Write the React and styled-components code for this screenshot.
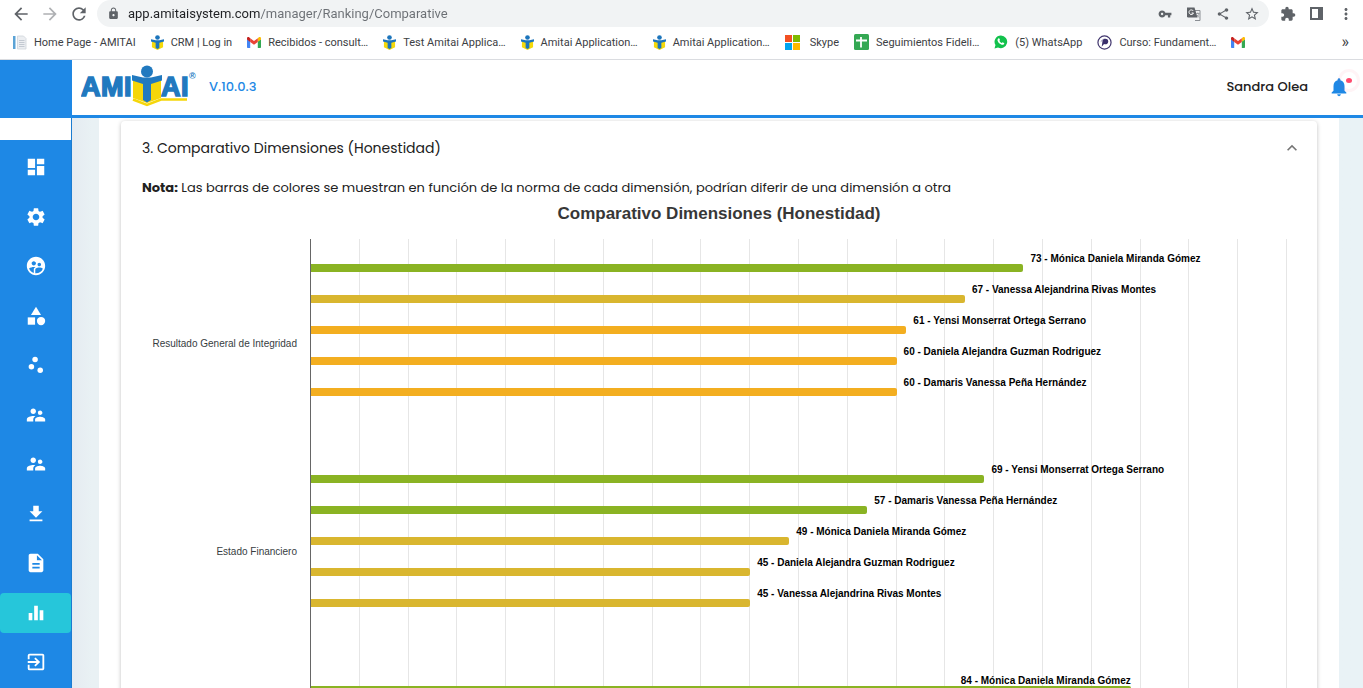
import React, { useState } from "react";
import styled, { createGlobalStyle } from "styled-components";
import {
  MdArrowBack,
  MdArrowForward,
  MdCategory,
  MdDashboard,
  MdDescription,
  MdDownload,
  MdEqualizer,
  MdExitToApp,
  MdExpandLess,
  MdExtension,
  MdLock,
  MdMoreVert,
  MdNotifications,
  MdRefresh,
  MdScatterPlot,
  MdSettings,
  MdShare,
  MdStarBorder,
  MdSupervisedUserCircle,
  MdSupervisorAccount,
  MdVpnKey,
} from "react-icons/md";

const GREEN = "#8ab323";
const MUSTARD = "#d9b62f";
const ORANGE = "#f3ae20";

const categories = [
  {
    name: "Resultado General de Integridad",
    results: [
      { score: 73, person: "Mónica Daniela Miranda Gómez", color: GREEN },
      { score: 67, person: "Vanessa Alejandrina Rivas Montes", color: MUSTARD },
      { score: 61, person: "Yensi Monserrat Ortega Serrano", color: ORANGE },
      { score: 60, person: "Daniela Alejandra Guzman Rodriguez", color: ORANGE },
      { score: 60, person: "Damaris Vanessa Peña Hernández", color: ORANGE },
    ],
  },
  {
    name: "Estado Financiero",
    results: [
      { score: 69, person: "Yensi Monserrat Ortega Serrano", color: GREEN },
      { score: 57, person: "Damaris Vanessa Peña Hernández", color: GREEN },
      { score: 49, person: "Mónica Daniela Miranda Gómez", color: MUSTARD },
      { score: 45, person: "Daniela Alejandra Guzman Rodriguez", color: MUSTARD },
      { score: 45, person: "Vanessa Alejandrina Rivas Montes", color: MUSTARD },
    ],
  },
  {
    name: "",
    results: [
      { score: 84, person: "Mónica Daniela Miranda Gómez", color: GREEN },
    ],
  },
];

const menu = [
  { name: "Dashboard", Icon: MdDashboard },
  { name: "Settings", Icon: MdSettings },
  { name: "Users", Icon: MdSupervisedUserCircle },
  { name: "Categories", Icon: MdCategory },
  { name: "Scatter", Icon: MdScatterPlot },
  { name: "Groups", Icon: MdSupervisorAccount },
  { name: "Candidates", Icon: MdSupervisorAccount },
  { name: "Downloads", Icon: MdDownload },
  { name: "Reports", Icon: MdDescription },
  { name: "Ranking", Icon: MdEqualizer, active: true },
  { name: "Exit", Icon: MdExitToApp },
];

const AmitaiIcon = () => (
  <svg width="13" height="15" viewBox="0 0 14 16">
    <path d="M1 6l6 2 6-2v7l-6 3-6-3z" fill="#f5d90a" />
    <circle cx="7" cy="2.6" r="2.5" fill="#1c75bc" />
    <path d="M0 4.5l5 1h4l5-1v2.5l-5 1.3V14l-2 1-2-1V8.300L0 7z" fill="#1c75bc" />
  </svg>
);

const GmailIcon = () => (
  <svg width="14" height="11" viewBox="0 0 14 11">
    <path d="M0 2v8.200q0 .8.800.8H3.200V4.500z" fill="#4285f4" />
    <path d="M14 2v8.200q0 .8-.8.800H10.800V4.500z" fill="#34a853" />
    <path d="M10.800 1.200v3.500L14 2.400V1.500C14 0 12.500-.3 11.600.5z" fill="#fbbc04" />
    <path d="M3.200 1.200L7 4.100l3.800-2.900v3.700L7 7.800 3.200 4.900z" fill="#ea4335" />
    <path d="M0 1.500v.9l3.200 2.500V1.200L2.400.5C1.500-.3 0 0 0 1.500z" fill="#c5221f" />
  </svg>
);

const PageIcon = () => (
  <svg width="15" height="15" viewBox="0 0 15 15">
    <path d="M1 1h2.500v13H1z" fill="#5ba3d6" />
    <path d="M5.500 1h6L14 3.500V14H5.500z" fill="#eceef1" stroke="#cfd4da" strokeWidth=".8" />
    <path d="M7 5.500h5.500M7 7.500h5.500M7 9.500h5.500M7 11.500h5.500" stroke="#c3c9d1" />
  </svg>
);

const WindowsIcon = () => (
  <svg width="15" height="15" viewBox="0 0 15 15">
    <path d="M0 0h7v7H0z" fill="#f25022" />
    <path d="M8 0h7v7H8z" fill="#7fba00" />
    <path d="M0 8h7v7H0z" fill="#00a4ef" />
    <path d="M8 8h7v7H8z" fill="#ffb900" />
  </svg>
);

const SheetsIcon = () => (
  <svg width="15" height="16" viewBox="0 0 15 16">
    <rect width="15" height="16" rx="1.500" fill="#34a853" />
    <path d="M2 6.500h11M7 3v10.500" stroke="#fff" strokeWidth="1.800" />
  </svg>
);

const WhatsAppIcon = () => (
  <svg width="14" height="14" viewBox="0 0 14 14">
    <path d="M7 .5a6.300 6.300 0 1 1-3 11.900L.5 13.500l1-3.400A6.300 6.300 0 0 1 7 .5z" fill="#12c14c" />
    <path
      d="M4.300 3.600c.6-.6 1-.3 1.200.2l.4 1c.1.500-.6.800-.4 1.200.5 1 1.200 1.600 2.200 2 .4.200.8-.8 1.200-.6l1.200.6c.5.300-.1 1.600-1.100 1.800-2.200.4-5.600-2.700-5.500-4.800 0-.5.300-1 .8-1.400z"
      fill="#fff"
    />
  </svg>
);

const CursoIcon = () => (
  <svg width="15" height="15" viewBox="0 0 16 16">
    <circle cx="8" cy="8" r="7" fill="#fff" stroke="#43386f" strokeWidth="1.300" />
    <path d="M5 12.500l1-7C7 3.500 12 3.300 12 6.800c0 2.800-2.800 3.400-4.500 2.800z" fill="#3a2f6b" />
    <path d="M4 7l3-2.500" stroke="#8d86ad" />
  </svg>
);

const TranslateIcon = () => (
  <svg width="14" height="14" viewBox="0 0 14 14">
    <path d="M5 3.500h8v10H8" fill="none" stroke="#8b8f94" />
    <path d="M0 .5h7.500l3 10H1.200Q0 10.500 0 9.300z" fill="#5f6368" />
    <path d="M6.300 4A2.300 2.300 0 1 0 6.500 6H4.600" fill="none" stroke="#fff" strokeWidth="1" />
    <path d="M9 6.500h3.500M10.800 5.500v1M12 6.500c-.3 1.500-1 2.500-2 3M10 8l2 2.500" fill="none" stroke="#8b8f94" strokeWidth=".8" />
  </svg>
);

const SidePanelIcon = () => (
  <svg width="13" height="13" viewBox="0 0 13 13">
    <path d="M1 1h11v11H1z" fill="none" stroke="#5f6368" strokeWidth="2" />
    <path d="M8 1h4v11H8z" fill="#5f6368" />
  </svg>
);

const bookmarks = [
  { name: "Home Page - AMITAI", Icon: PageIcon },
  { name: "CRM | Log in", Icon: AmitaiIcon },
  { name: "Recibidos - consult…", Icon: GmailIcon },
  { name: "Test Amitai Applica…", Icon: AmitaiIcon },
  { name: "Amitai Application…", Icon: AmitaiIcon },
  { name: "Amitai Application…", Icon: AmitaiIcon },
  { name: "Skype", Icon: WindowsIcon, wide: true },
  { name: "Seguimientos Fideli…", Icon: SheetsIcon },
  { name: "(5) WhatsApp", Icon: WhatsAppIcon },
  { name: "Curso: Fundament…", Icon: CursoIcon },
  { name: "", Icon: GmailIcon },
];

const Logo = () => (
  <svg width="118" height="44" viewBox="0 0 118 44" role="img" aria-label="Amitai">
    <g
      fill="#2179bf"
      stroke="#2179bf"
      strokeWidth="1.600"
      fontFamily="'Liberation Sans', Arial, sans-serif"
      fontWeight="700"
      fontSize="27"
    >
      <text x="0" y="31">A</text>
      <text x="20" y="31">M</text>
      <text x="43" y="31">I</text>
      <text x="80" y="31">A</text>
      <text x="100" y="31">I</text>
    </g>
    <path d="M52 13l14 5 14-5v20l-14 5-14-5z" fill="#f5d60a" />
    <path d="M52 34.500l14 5.500 14-5.500h26" fill="none" stroke="#f5d60a" strokeWidth="2.500" />
    <path d="M51 10l11 2.500h8L81 10v5.500L70 19v16l-4 2.500-4-2.500V19l-11-3.500z" fill="#2179bf" />
    <circle cx="66" cy="6.500" r="6" fill="#2179bf" />
    <text
      x="108"
      y="14"
      fill="#2179bf"
      fontFamily="'Liberation Sans', Arial, sans-serif"
      fontSize="9"
      fontWeight="700"
    >
      ®
    </text>
  </svg>
);

const App = () => {
  const [open, setOpen] = useState(true);

  return (
    <>
      <GlobalStyle />
      <Window>
        <Toolbar>
          <ToolButton aria-label="Back"><MdArrowBack size={20} /></ToolButton>
          <ToolButton aria-label="Forward" $faded><MdArrowForward size={20} /></ToolButton>
          <ToolButton aria-label="Reload"><MdRefresh size={20} /></ToolButton>
          <AddressBar>
            <MdLock size={13} />
            <AddressInput
              aria-label="Address"
              defaultValue="app.amitaisystem.com/manager/Ranking/Comparative"
            />
            <AddressButton aria-label="Passwords"><MdVpnKey size={14} /></AddressButton>
            <AddressButton aria-label="Translate"><TranslateIcon /></AddressButton>
            <AddressButton aria-label="Share"><MdShare size={14} /></AddressButton>
            <AddressButton aria-label="Bookmark"><MdStarBorder size={16} /></AddressButton>
          </AddressBar>
          <ToolButton aria-label="Extensions"><MdExtension size={16} /></ToolButton>
          <ToolButton aria-label="Side panel"><SidePanelIcon /></ToolButton>
          <ToolButton aria-label="Menu"><MdMoreVert size={18} /></ToolButton>
        </Toolbar>

        <Bookmarks>
          {bookmarks.map(({ name, Icon, wide }, index) => (
            <Bookmark key={index} href="#" $wide={wide} aria-label={name || "Gmail"}>
              <Icon />
              {name}
            </Bookmark>
          ))}
          <MoreBookmarks aria-label="More bookmarks">»</MoreBookmarks>
        </Bookmarks>

        <Page>
          <Sidebar>
            <SidebarTop />
            <Menu>
              {menu.map(({ name, Icon, active }) => (
                <MenuLink key={name} href="#" aria-label={name} $active={active}>
                  <Icon size={22} />
                </MenuLink>
              ))}
            </Menu>
          </Sidebar>

          <Main>
            <Header>
              <Logo />
              <Version>V.10.0.3</Version>
              <UserName>Sandra Olea</UserName>
              <BellButton aria-label="Notifications">
                <MdNotifications size={22} />
                <BellDot />
              </BellButton>
            </Header>

            <Content>
              <Sheet>
                <Card>
                  <CardHeader aria-expanded={open} onClick={() => setOpen(!open)}>
                    3. Comparativo Dimensiones (Honestidad)
                    <Chevron size={20} $open={open} />
                  </CardHeader>
                  {open && (
                    <>
                      <Note>
                        <b>Nota:</b> Las barras de colores se muestran en función de la
                        norma de cada dimensión, podrían diferir de una dimensión a otra
                      </Note>
                      <ChartTitle>Comparativo Dimensiones (Honestidad)</ChartTitle>
                      <Chart>
                        <CategoryColumn>
                          {categories.map((category, index) => (
                            <Category key={index}>{category.name}</Category>
                          ))}
                        </CategoryColumn>
                        <Plot>
                          <GridLines>
                            {Array.from({ length: 20 }, (_, i) => (
                              <span key={i} />
                            ))}
                          </GridLines>
                          {categories.map((category, index) => (
                            <Group key={index}>
                              {category.results.map(({ score, person, color }) => {
                                const label = <BarLabel>{score} - {person}</BarLabel>;
                                // long bars keep the label above them so it stays in the plot
                                const inside = score > 80;
                                return (
                                  <Row key={person}>
                                    <BarSlot style={{ width: `${score}%` }}>
                                      {inside && label}
                                      <Bar $color={color} />
                                    </BarSlot>
                                    {!inside && label}
                                  </Row>
                                );
                              })}
                            </Group>
                          ))}
                        </Plot>
                      </Chart>
                    </>
                  )}
                </Card>
              </Sheet>
            </Content>
          </Main>
        </Page>
      </Window>
    </>
  );
};

export default App;

//********************************************************  style component
const GlobalStyle = createGlobalStyle`
  * {
    box-sizing: border-box;
  }

  body {
    margin: 0;
    font-family: Poppins, Inter, sans-serif;
    color: #212121;
    background: #fff;
  }

  button {
    padding: 0;
    border: none;
    background: none;
    font: inherit;
    color: inherit;
    cursor: pointer;
  }

  svg {
    flex-shrink: 0;
  }
`;

const Window = styled.div`
  display: flex;
  flex-direction: column;
  height: 100vh;
  overflow: hidden;
`;

const Toolbar = styled.div`
  display: flex;
  align-items: center;
  gap: 8px;
  height: 28px;
  padding: 0 7px 1px 10px;
  color: #5f6368;
`;

const ToolButton = styled.button`
  display: flex;
  align-items: center;
  justify-content: center;
  width: 21px;
  height: 26px;
  opacity: ${({ $faded }) => ($faded ? 0.5 : 1)};
`;

const AddressBar = styled.div`
  display: flex;
  flex: 1;
  align-items: center;
  gap: 8px;
  height: 27px;
  padding: 0 7px 0 10px;
  border-radius: 14px;
  background: #f1f3f4;
`;

const AddressInput = styled.input`
  flex: 1;
  min-width: 0;
  padding: 0;
  border: none;
  outline: none;
  font-family: Roboto, sans-serif;
  font-size: 13px;
  /* the host is darker than the path */
  background: linear-gradient(90deg, #202124 132px, #6b6f74 132px);
  background-clip: text;
  -webkit-text-fill-color: transparent;
`;

const AddressButton = styled.button`
  display: flex;
  align-items: center;
  justify-content: center;
  width: 21px;
  height: 24px;
`;

const Bookmarks = styled.nav`
  display: flex;
  align-items: center;
  gap: 15px;
  height: 32px;
  padding: 0 14px 3px 12px;
  border-bottom: 1px solid #dadce0;
`;

const Bookmark = styled.a`
  display: flex;
  align-items: center;
  gap: ${({ $wide }) => ($wide ? 10 : 7)}px;
  font-family: Roboto, sans-serif;
  font-size: 11px;
  color: #3c4043;
  text-decoration: none;
  white-space: nowrap;
`;

const MoreBookmarks = styled.button`
  margin-left: auto;
  font-family: Roboto, sans-serif;
  font-size: 16px;
  line-height: 16px;
  color: #3c4043;
`;

const Page = styled.div`
  display: flex;
  flex: 1;
  min-height: 0;
`;

const Sidebar = styled.aside`
  display: flex;
  flex-direction: column;
  gap: 22px;
  width: 72px;
  border-right: 1px solid #1c7cd0;
`;

const SidebarTop = styled.div`
  height: 58px;
  margin-right: -1px;
  background: #1e88e5;
`;

const Menu = styled.nav`
  display: flex;
  flex: 1;
  flex-direction: column;
  justify-content: space-between;
  min-height: 0;
  padding: 7px 0 6px;
  background: #1e88e5;
`;

const MenuLink = styled.a`
  display: flex;
  align-items: center;
  justify-content: center;
  height: 40px;
  border-radius: 4px;
  color: #fff;
  background: ${({ $active }) => ($active ? "#26c6da" : "transparent")};
`;

const Main = styled.main`
  display: flex;
  flex: 1;
  flex-direction: column;
  min-width: 0;
`;

const Header = styled.header`
  display: flex;
  align-items: center;
  height: 58px;
  padding: 0 13px 2px 9px;
  border-bottom: 3px solid #1e88e5;
`;

const Version = styled.span`
  margin-left: 10px;
  font-size: 13px;
  font-weight: 500;
  color: #1e88e5;
`;

const UserName = styled.span`
  margin-left: auto;
  font-size: 13px;
  font-weight: 500;
`;

const BellButton = styled.button`
  position: relative;
  display: flex;
  margin-left: 20px;
  color: #1e88e5;
`;

const BellDot = styled.span`
  position: absolute;
  top: 2px;
  right: -2px;
  width: 6px;
  height: 5px;
  border-radius: 50%;
  background: #ff4b6e;

  &::after {
    content: "";
    position: absolute;
    inset: -9px -8px;
    border: 3px solid rgba(255, 75, 110, 0.06);
    border-radius: 50%;
  }
`;

const Content = styled.div`
  flex: 1;
  min-height: 0;
  overflow: hidden;
  padding: 0 24px 0 27px;
  background: linear-gradient(90deg, #e5ebf1, #e9f1f4 20px, #e9f2f6);
`;

const Sheet = styled.div`
  padding: 3px 22px 22px;
  background: #fff;
`;

const Card = styled.section`
  border-radius: 4px;
  background: #fff;
  box-shadow: 0 1px 4px rgba(0, 0, 0, 0.25);
`;

const CardHeader = styled.button`
  display: flex;
  align-items: center;
  justify-content: space-between;
  width: 100%;
  height: 54px;
  padding: 0 15px 0 21px;
  font-size: 14px;
  text-align: left;
`;

const Chevron = styled(MdExpandLess)`
  color: #757575;
  transform: rotate(${({ $open }) => ($open ? 0 : 180)}deg);
`;

const Note = styled.p`
  margin: 0;
  padding: 0 21px;
  font-size: 13px;
  line-height: 26px;
`;

const ChartTitle = styled.h2`
  margin: 0;
  font-family: "Liberation Sans", Arial, sans-serif;
  font-size: 17px;
  line-height: 26px;
  text-align: center;
  color: #373737;
`;

const Chart = styled.div`
  display: flex;
  padding: 12px 30px 0 0;
  font-family: "Liberation Sans", Arial, sans-serif;
  font-size: 10px;
  line-height: 11px;
`;

const CategoryColumn = styled.div`
  width: 189px;
  padding-right: 13px;
`;

const Category = styled.div`
  display: flex;
  align-items: center;
  justify-content: flex-end;
  height: 208px;
  color: #373d3f;
`;

const Plot = styled.div`
  position: relative;
  flex: 1;
  padding-top: 14px;
  border-left: 1px solid #666;
`;

const GridLines = styled.div`
  position: absolute;
  inset: 0;
  display: flex;

  span {
    flex: 1;
    border-right: 1px solid #e6e6e6;
  }
`;

const Group = styled.div`
  position: relative;
  padding-bottom: 56px;
`;

const Row = styled.div`
  display: flex;
  align-items: flex-start;
  gap: 7px;
  height: 31px;
`;

const BarSlot = styled.div`
  display: flex;
  flex-direction: column;
  flex-shrink: 0;
  height: 19px;
  text-align: right;
`;

const Bar = styled.div`
  flex-shrink: 0;
  height: 8px;
  margin-top: auto;
  border-radius: 0 2px 2px 0;
  background: ${({ $color }) => $color};
`;

const BarLabel = styled.span`
  font-weight: 700;
  color: #000;
  white-space: nowrap;
`;
